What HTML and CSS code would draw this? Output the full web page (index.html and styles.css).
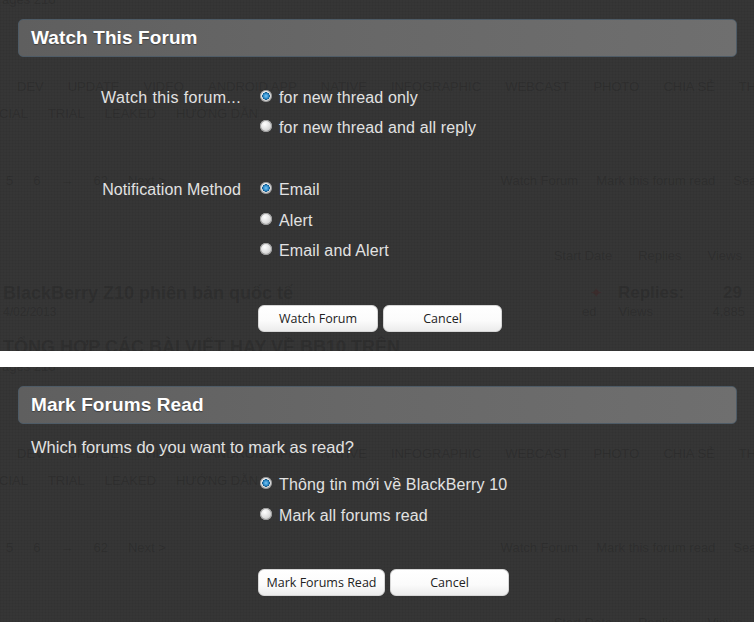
FILE: index.html
```html
<!DOCTYPE html>
<html lang="en">
<head>
<meta charset="utf-8">
<title>Watch This Forum / Mark Forums Read</title>
<link rel="stylesheet" href="styles.css">
</head>
<body>
<section class="shot shot-watch">
  <div class="backdrop">
    <div class="bd-top">ages 216</div>
    <div class="bd-tags bd-tags-1"><span>DEV</span><span>UPDATE</span><span>VIDEO</span><span>ANDROID APP</span><span>NATIVE</span><span>INFOGRAPHIC</span><span>WEBCAST</span><span>PHOTO</span><span>CHIA SẺ</span><span>TH</span></div>
    <div class="bd-tags bd-tags-2"><span>CIAL</span><span>TRIAL</span><span>LEAKED</span><span>HƯỚNG DẪN</span></div>
    <div class="bd-nav"><div class="bd-pages"><span>5</span><span>6</span><span>→</span><span>62</span><span>Next &gt;</span></div><div class="bd-links"><span>Watch Forum</span><span>Mark this forum read</span><span>Search th</span></div></div>
    <div class="bd-cols"><span>Start Date</span><span>Replies</span><span>Views</span></div>
    <div class="bd-thread"><div class="bd-title">BlackBerry Z10 phiên bản quốc tế</div><div class="bd-stat"><span class="pin">✦</span><span class="bd-rep">Replies:</span><span class="bd-num">29</span></div></div>
    <div class="bd-meta"><span>4/02/2013</span><div class="bd-stat2"><span>ed</span><span class="bd-lbl">Views</span><span class="bd-num2">4,885</span></div></div>
    <div class="bd-thread bd-next"><div class="bd-title">TỔNG HỢP CÁC BÀI VIẾT HAY VỀ BB10 TRÊN</div></div>
  </div>
  <div class="dialog">
    <h2 class="dlg-head">Watch This Forum</h2>
    <div class="form">
      <div class="group group-first">
        <div class="g-label g-label-wide">Watch this forum...</div>
        <div class="g-options">
          <div class="opt"><span class="radio checked"></span><span>for new thread only</span></div>
          <div class="opt"><span class="radio"></span><span>for new thread and all reply</span></div>
        </div>
      </div>
      <div class="group group-second">
        <div class="g-label">Notification Method</div>
        <div class="g-options tall">
          <div class="opt"><span class="radio checked"></span><span>Email</span></div>
          <div class="opt"><span class="radio"></span><span>Alert</span></div>
          <div class="opt"><span class="radio"></span><span>Email and Alert</span></div>
        </div>
      </div>
      <div class="buttons">
        <button class="btn btn-watch" type="button">Watch Forum</button>
        <button class="btn btn-cancel" type="button">Cancel</button>
      </div>
    </div>
  </div>
</section>
<div class="band"></div>
<section class="shot shot-mark">
  <div class="backdrop">
    <div class="bd-top">ages 216</div>
    <div class="bd-tags bd-tags-1"><span>DEV</span><span>UPDATE</span><span>VIDEO</span><span>ANDROID APP</span><span>NATIVE</span><span>INFOGRAPHIC</span><span>WEBCAST</span><span>PHOTO</span><span>CHIA SẺ</span><span>TH</span></div>
    <div class="bd-tags bd-tags-2"><span>CIAL</span><span>TRIAL</span><span>LEAKED</span><span>HƯỚNG DẪN</span></div>
    <div class="bd-nav"><div class="bd-pages"><span>5</span><span>6</span><span>→</span><span>62</span><span>Next &gt;</span></div><div class="bd-links"><span>Watch Forum</span><span>Mark this forum read</span><span>Search th</span></div></div>
    <div class="bd-cols"><span>Start Date</span><span>Replies</span><span>Views</span></div>
  </div>
  <div class="dialog">
    <h2 class="dlg-head">Mark Forums Read</h2>
    <p class="question">Which forums do you want to mark as read?</p>
    <div class="mark-options">
      <div class="opt"><span class="radio checked"></span><span>Thông tin mới về BlackBerry 10</span></div>
      <div class="opt"><span class="radio"></span><span>Mark all forums read</span></div>
    </div>
    <div class="buttons">
      <button class="btn btn-mark" type="button">Mark Forums Read</button>
      <button class="btn btn-cancel" type="button">Cancel</button>
    </div>
  </div>
</section>
</body>
</html>
```

FILE: styles.css
```css
* { box-sizing: border-box; }

html, body {
  margin: 0;
  padding: 0;
  background: #fff;
}

body {
  width: 754px;
  height: 622px;
  overflow: hidden;
  font-family: "Liberation Sans", Arial, sans-serif;
}

.shot {
  position: relative;
  overflow: hidden;
  background-color: #363636;
  background-image:
    repeating-linear-gradient(0deg, rgba(0,0,0,0.035) 0 1px, transparent 1px 3px),
    repeating-linear-gradient(90deg, rgba(0,0,0,0.035) 0 1px, transparent 1px 3px);
}

.shot-watch { height: 351px; }
.shot-mark { height: 255px; }

.band {
  height: 16px;
  background: #fff;
}

/* faint page behind the overlay */
.backdrop {
  color: rgba(0, 0, 0, 0.14);
  font-size: 13px;
  line-height: 18px;
  white-space: nowrap;
}

.bd-top {
  margin-top: -9px;
  padding-left: 2px;
}

.bd-tags {
  display: flex;
  gap: 24px;
  text-transform: uppercase;
}

.bd-tags-1 { margin-top: 69px; padding-left: 17px; }
.bd-tags-2 { margin-top: 9px; margin-left: -1px; gap: 20px; }

.bd-nav {
  display: flex;
  justify-content: space-between;
  margin-top: 49px;
}

.bd-pages { display: flex; gap: 20px; padding-left: 6px; }
.bd-links { display: flex; gap: 18px; margin-right: -35px; }

.bd-cols {
  display: flex;
  justify-content: flex-end;
  gap: 26px;
  margin-top: 57px;
  margin-right: 12px;
}

.bd-thread {
  display: flex;
  justify-content: space-between;
  align-items: center;
  height: 24px;
  margin-top: 16px;
}

.bd-title {
  font-weight: bold;
  font-size: 18px;
  padding-left: 3px;
}

.bd-stat {
  display: flex;
  align-items: center;
  width: 152px;
  margin-right: 12px;
}
.pin { font-size: 15px; color: rgba(90, 0, 0, 0.18); width: 28px; }
.bd-rep { font-size: 17px; font-weight: bold; }
.bd-num { font-size: 17px; font-weight: bold; margin-left: auto; }

.bd-meta {
  display: flex;
  justify-content: space-between;
  margin-top: -1px;
  line-height: 16px;
  font-size: 12px;
  padding-left: 3px;
}

.bd-stat2 {
  display: flex;
  width: 163px;
  margin-right: 9px;
  font-size: 13px;
}
.bd-lbl { margin-left: 22px; }
.bd-num2 { margin-left: auto; }

.bd-next { margin-top: 15px; }

/* overlay dialog */
.dialog {
  position: absolute;
  inset: 0;
  padding: 19px 17px 0 18px;
  color: #e2e2e2;
}

.dlg-head {
  margin: 0;
  height: 38px;
  padding: 0 12px;
  display: flex;
  align-items: center;
  border: 1px solid #4e5b66;
  border-radius: 5px;
  background: linear-gradient(90deg, #5f5f5f 0%, #686868 50%, #6f6f6f 100%);
  color: #fff;
  font-size: 19px;
  font-weight: bold;
  letter-spacing: 0.1px;
  text-shadow: 0 1px 1px rgba(0, 0, 0, 0.35);
}

.form {
  margin-top: 26px;
}

.group {
  display: grid;
  grid-template-columns: 223px auto;
  column-gap: 19px;
  font-size: 16px;
}

.group-second { margin-top: 32px; }

.g-label {
  text-align: right;
  line-height: 30px;
  letter-spacing: 0.1px;
}

.g-label-wide { letter-spacing: 0.38px; }

.opt {
  display: flex;
  align-items: center;
  height: 30px;
  font-size: 16px;
  letter-spacing: 0.15px;
}

.tall .opt { height: 30.5px; }

.radio {
  width: 12px;
  height: 12px;
  margin-right: 7px;
  margin-top: -4px;
  border-radius: 50%;
  background: radial-gradient(circle at 40% 35%, #ffffff 0%, #e8e8e8 35%, #b8b8b8 100%);
  box-shadow: inset 0 0 0 1px #9a9a9a;
  flex: none;
}

.radio.checked {
  background:
    radial-gradient(circle at 50% 50%, #7fc4ee 0%, #2d8fd0 28%, #175c8c 42%, transparent 46%),
    radial-gradient(circle at 40% 35%, #ffffff 0%, #e6e6e6 45%, #bdbdbd 100%);
}

.buttons {
  display: flex;
  gap: 5px;
  margin-top: 38px;
  padding-left: 240px;
}

.btn {
  height: 27px;
  border: 1px solid #d6d6d6;
  border-radius: 6px;
  background: linear-gradient(#ffffff 0%, #fbfbfb 60%, #ececec 100%);
  color: #222;
  font-family: "Open Sans", "Liberation Sans", sans-serif;
  font-size: 12.5px;
  padding: 0;
}

.btn-watch { width: 120px; }
.btn-cancel { width: 119px; }
.btn-mark { width: 127px; }

.question {
  margin: 11px 0 0 13px;
  font-size: 16.5px;
  line-height: 24px;
}

.mark-options {
  margin-top: 10px;
  padding-left: 242px;
}

.mark-options .opt { height: 31px; }

.shot-mark .buttons { margin-top: 38px; }
```
